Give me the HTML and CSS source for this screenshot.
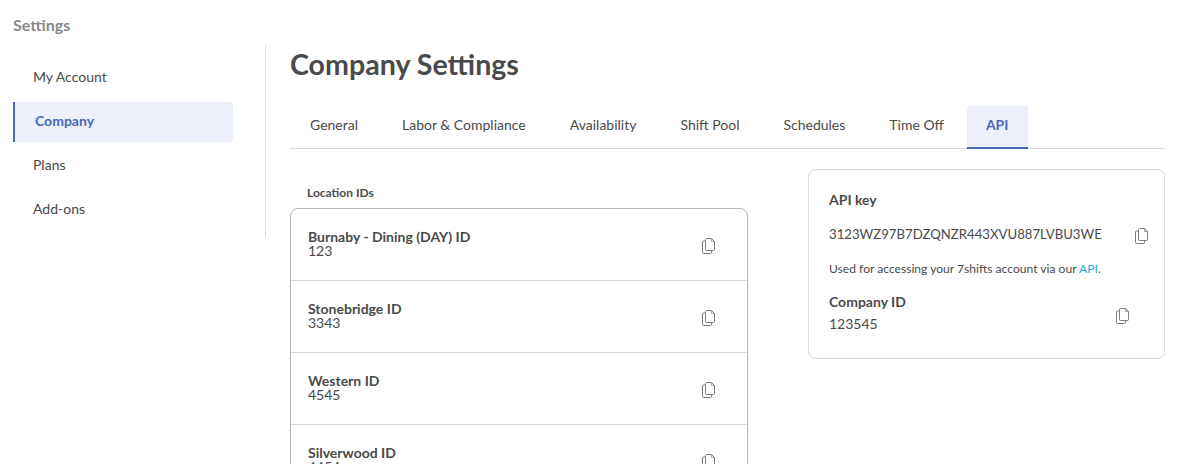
FILE: index.html
```html
<!DOCTYPE html>
<html lang="en">
<head>
<meta charset="utf-8">
<title>Company Settings</title>
<link rel="stylesheet" href="styles.css">
</head>
<body>
<svg class="sprite" width="0" height="0" aria-hidden="true">
  <symbol id="copy" viewBox="0 0 16 16">
    <path d="M4.5 1.5 A1 1 0 0 1 5.5 .5 H10.5 L13.5 3.5 V11.5 A1 1 0 0 1 12.5 12.5 H5.5 A1 1 0 0 1 4.5 11.5 Z" fill="none" stroke="currentColor"/>
    <path d="M10.5 .5 V3.5 H13.5" fill="none" stroke="currentColor" stroke-width=".7"/>
    <path d="M4.5 3 H2.5 A1 1 0 0 0 1.5 4 V14.5 A1 1 0 0 0 2.5 15.5 H9.5 A1 1 0 0 0 10.5 14.5 V12.5" fill="none" stroke="currentColor"/>
  </symbol>
</svg>
<div class="page">
  <aside class="sidebar">
    <h2 class="sidebar-title">Settings</h2>
    <nav class="side-nav">
      <a class="side-link">My Account</a>
      <a class="side-link active">Company</a>
      <a class="side-link">Plans</a>
      <a class="side-link">Add-ons</a>
    </nav>
  </aside>
  <main class="main">
    <h1 class="title">Company Settings</h1>
    <div class="tabs">
      <a class="tab">General</a>
      <a class="tab">Labor &amp; Compliance</a>
      <a class="tab">Availability</a>
      <a class="tab">Shift Pool</a>
      <a class="tab">Schedules</a>
      <a class="tab">Time Off</a>
      <a class="tab active">API</a>
    </div>
    <div class="columns">
      <section class="locations">
        <h3 class="locations-label">Location IDs</h3>
        <div class="list">
          <div class="row"><div class="row-text"><div class="row-name">Burnaby - Dining (DAY) ID</div><div class="row-value">123</div></div><svg class="icon row-icon"><use href="#copy"/></svg></div>
          <div class="row"><div class="row-text"><div class="row-name">Stonebridge ID</div><div class="row-value">3343</div></div><svg class="icon row-icon"><use href="#copy"/></svg></div>
          <div class="row"><div class="row-text"><div class="row-name">Western ID</div><div class="row-value">4545</div></div><svg class="icon row-icon"><use href="#copy"/></svg></div>
          <div class="row"><div class="row-text"><div class="row-name">Silverwood ID</div><div class="row-value">4454</div></div><svg class="icon row-icon"><use href="#copy"/></svg></div>
        </div>
      </section>
      <section class="card">
        <div class="card-heading">API key</div>
        <div class="key-line"><span class="key">3123WZ97B7DZQNZR443XVU887LVBU3WE</span><svg class="icon key-icon"><use href="#copy"/></svg></div>
        <p class="hint">Used for accessing your 7shifts account via our <a class="link">API</a>.</p>
        <div class="company-line">
          <div>
            <div class="card-heading">Company ID</div>
            <div class="company-value">123545</div>
          </div>
          <svg class="icon company-icon"><use href="#copy"/></svg>
        </div>
      </section>
    </div>
  </main>
</div>
</body>
</html>
```
FILE: styles.css
```css
* { box-sizing: border-box; }
html, body { margin: 0; height: 464px; overflow: hidden; background: #fff; }
body { font-family: Lato, "Open Sans", sans-serif; color: #4a4a4a; font-size: 14px; }
.sprite { position: absolute; }
.page { display: flex; height: 464px; overflow: hidden; }

.sidebar { width: 266px; flex: none; padding: 16px 0 0 13px; }
.sidebar-title { margin: 0; font-size: 16px; line-height: 18px; font-weight: 700; color: #888; }
.side-nav { display: flex; flex-direction: column; width: 253px; height: 192px; margin-top: 11px; padding-top: 13px; padding-right: 32px; border-right: 1px solid #d9d9d9; }
.side-link { display: flex; align-items: center; flex: none; height: 40px; margin-bottom: 4px; padding: 0 0 4px 20px; font-size: 14px; color: #4a4a4a; }
.side-link.active { border-left: 2px solid #4a67c0; border-radius: 0 4px 4px 0; background: #edf0fa; color: #4a67c0; font-weight: 700; }

.main { flex: 1; min-width: 0; padding: 46px 12px 0 24px; }
.title { margin: 0; font-size: 28.6px; line-height: 36px; font-weight: 700; color: #4a4a4a; }
.tabs { display: flex; gap: 4px; height: 43px; margin-top: 24px; border-bottom: 1px solid #d9d9d9; }
.tab { display: flex; align-items: center; height: 43px; padding: 0 20px 6px; font-size: 14px; color: #4a4a4a; border-radius: 4px 4px 0 0; }
.tab.active { padding: 0 20px 4px 19px; margin-left: -1px; background: #edf0fa; color: #4a67c0; font-weight: 700; border-bottom: 2px solid #4a67c0; }

.columns { display: flex; align-items: flex-start; gap: 60px; margin-top: 20px; }
.locations { width: 458px; flex: none; }
.locations-label { margin: 0; padding: 17px 0 0 17px; font-size: 12px; line-height: 14px; font-weight: 700; color: #4a4a4a; }
.list { margin-top: 8px; border: 1px solid #b4b4b4; border-radius: 8px; }
.row { display: flex; justify-content: space-between; align-items: center; height: 72px; padding: 0 30px 0 17px; border-bottom: 1px solid #d9d9d9; }
.row-text { margin-bottom: 2px; }
.row-name { font-size: 14px; line-height: 14px; font-weight: 700; }
.row-value { font-size: 14px; line-height: 14px; }
.icon { width: 16px; height: 16px; flex: none; color: #7d7d7d; }
.row-icon { margin-top: 2px; }

.card { flex: 1; height: 190px; padding: 21px 20px 0 20px; border: 1px solid #d9d9d9; border-radius: 8px; }
.card-heading { font-size: 14px; line-height: 18px; font-weight: 700; }
.key-line { display: flex; justify-content: space-between; align-items: center; margin: 15px -6px 0 0; line-height: 20px; }
.key { font-size: 13.2px; }
.key-icon { margin-top: 4px; }
.hint { margin: 18px 0 0; font-size: 12.1px; line-height: 14px; }
.link { color: #29a9d8; }
.company-line { display: flex; justify-content: space-between; align-items: center; margin-top: 17px; padding-right: 13px; }
.company-value { margin-top: 4px; font-size: 14px; line-height: 18px; }
.company-icon { margin-top: 6px; }
```
